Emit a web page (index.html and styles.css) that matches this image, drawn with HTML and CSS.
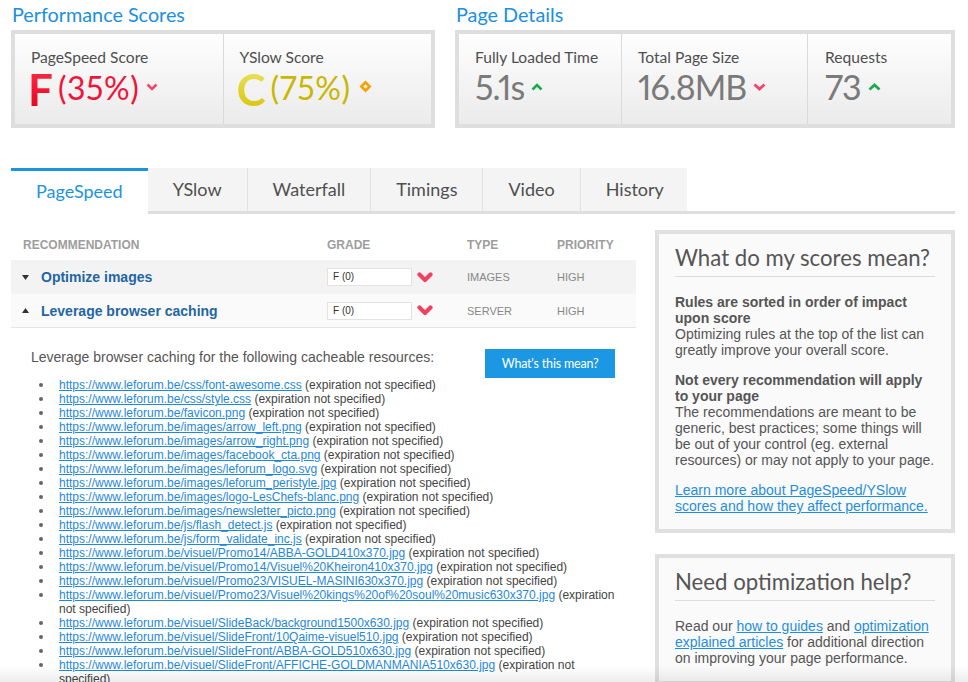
FILE: index.html
```html
<!DOCTYPE html>
<html lang="en">
<head>
<meta charset="utf-8">
<title>Performance Report</title>
<link rel="stylesheet" href="styles.css">
</head>
<body>
<div class="page">
  <div class="top">
    <section class="summary perf">
      <h2 class="section-title">Performance Scores</h2>
      <div class="box">
        <div class="card">
          <div class="label">PageSpeed Score</div>
          <div class="value"><span class="grade grade-f">F</span><span class="pct pct-red">(35%)</span><svg class="ind" width="12" height="8" viewBox="0 0 12 8"><polyline points="1.5,1.5 6,6 10.5,1.5" fill="none" stroke="#f0476a" stroke-width="2.6"/></svg></div>
        </div>
        <div class="card">
          <div class="label">YSlow Score</div>
          <div class="value"><span class="grade grade-c">C</span><span class="pct pct-yellow">(75%)</span><svg class="ind ind-diamond" width="13" height="13" viewBox="0 0 13 13"><polygon points="6.5,0.5 12.5,6.5 6.5,12.5 0.5,6.5" fill="#f5a100"/><polygon points="6.5,4.2 8.8,6.5 6.5,8.8 4.2,6.5" fill="#fff3d6"/></svg></div>
        </div>
      </div>
    </section>
    <section class="summary details">
      <h2 class="section-title">Page Details</h2>
      <div class="box">
        <div class="card">
          <div class="label">Fully Loaded Time</div>
          <div class="value">5.1s<svg class="ind" width="12" height="8" viewBox="0 0 12 8"><polyline points="1.5,6.5 6,2 10.5,6.5" fill="none" stroke="#1aab4b" stroke-width="2.6"/></svg></div>
        </div>
        <div class="card">
          <div class="label">Total Page Size</div>
          <div class="value">16.8MB<svg class="ind" width="13" height="8" viewBox="0 0 13 8"><polyline points="1.5,1.5 6.5,6 11.5,1.5" fill="none" stroke="#f0476a" stroke-width="2.8"/></svg></div>
        </div>
        <div class="card">
          <div class="label">Requests</div>
          <div class="value">73<svg class="ind" width="13" height="8" viewBox="0 0 13 8"><polyline points="1.5,6.5 6.5,2 11.5,6.5" fill="none" stroke="#1aab4b" stroke-width="2.8"/></svg></div>
        </div>
      </div>
    </section>
  </div>

  <nav class="tabs">
    <a class="tab active">PageSpeed</a>
    <a class="tab">YSlow</a>
    <a class="tab">Waterfall</a>
    <a class="tab">Timings</a>
    <a class="tab">Video</a>
    <a class="tab">History</a>
  </nav>

  <div class="main">
    <div class="content">
      <div class="rules">
        <div class="grid thead">
          <div class="c-rec">Recommendation</div>
          <div>Grade</div>
          <div>Type</div>
          <div>Priority</div>
        </div>
        <div class="grid trow odd">
          <div class="c-rec"><svg class="tri" width="7" height="5" viewBox="0 0 7 5"><polygon points="0,0 7,0 3.5,5" fill="#333"/></svg><a class="rule-name">Optimize images</a></div>
          <div class="c-grade"><span class="grade-box">F (0)</span><svg class="heart" width="16" height="11" viewBox="0 0 16 11"><polyline points="2.5,2.5 8,8 13.5,2.5" fill="none" stroke="#f2405f" stroke-width="4.2" stroke-linecap="round" stroke-linejoin="round"/></svg></div>
          <div class="c-meta">Images</div>
          <div class="c-meta">High</div>
        </div>
        <div class="grid trow even">
          <div class="c-rec"><svg class="tri" width="7" height="5" viewBox="0 0 7 5"><polygon points="0,5 7,5 3.5,0" fill="#333"/></svg><a class="rule-name">Leverage browser caching</a></div>
          <div class="c-grade"><span class="grade-box">F (0)</span><svg class="heart" width="16" height="11" viewBox="0 0 16 11"><polyline points="2.5,2.5 8,8 13.5,2.5" fill="none" stroke="#f2405f" stroke-width="4.2" stroke-linecap="round" stroke-linejoin="round"/></svg></div>
          <div class="c-meta">Server</div>
          <div class="c-meta">High</div>
        </div>
      </div>

      <div class="rule-details">
        <div class="details-head">
          <p>Leverage browser caching for the following cacheable resources:</p>
          <a class="btn">What's this mean?</a>
        </div>
        <ul class="res">
          <li><a>https://www.leforum.be/css/font-awesome.css</a> (expiration not specified)</li>
          <li><a>https://www.leforum.be/css/style.css</a> (expiration not specified)</li>
          <li><a>https://www.leforum.be/favicon.png</a> (expiration not specified)</li>
          <li><a>https://www.leforum.be/images/arrow_left.png</a> (expiration not specified)</li>
          <li><a>https://www.leforum.be/images/arrow_right.png</a> (expiration not specified)</li>
          <li><a>https://www.leforum.be/images/facebook_cta.png</a> (expiration not specified)</li>
          <li><a>https://www.leforum.be/images/leforum_logo.svg</a> (expiration not specified)</li>
          <li><a>https://www.leforum.be/images/leforum_peristyle.jpg</a> (expiration not specified)</li>
          <li><a>https://www.leforum.be/images/logo-LesChefs-blanc.png</a> (expiration not specified)</li>
          <li><a>https://www.leforum.be/images/newsletter_picto.png</a> (expiration not specified)</li>
          <li><a>https://www.leforum.be/js/flash_detect.js</a> (expiration not specified)</li>
          <li><a>https://www.leforum.be/js/form_validate_inc.js</a> (expiration not specified)</li>
          <li><a>https://www.leforum.be/visuel/Promo14/ABBA-GOLD410x370.jpg</a> (expiration not specified)</li>
          <li><a>https://www.leforum.be/visuel/Promo14/Visuel%20Kheiron410x370.jpg</a> (expiration not specified)</li>
          <li><a>https://www.leforum.be/visuel/Promo23/VISUEL-MASINI630x370.jpg</a> (expiration not specified)</li>
          <li><a>https://www.leforum.be/visuel/Promo23/Visuel%20kings%20of%20soul%20music630x370.jpg</a> (expiration not specified)</li>
          <li><a>https://www.leforum.be/visuel/SlideBack/background1500x630.jpg</a> (expiration not specified)</li>
          <li><a>https://www.leforum.be/visuel/SlideFront/10Qaime-visuel510.jpg</a> (expiration not specified)</li>
          <li><a>https://www.leforum.be/visuel/SlideFront/ABBA-GOLD510x630.jpg</a> (expiration not specified)</li>
          <li><a>https://www.leforum.be/visuel/SlideFront/AFFICHE-GOLDMANMANIA510x630.jpg</a> (expiration not specified)</li>
        </ul>
      </div>
    </div>

    <aside class="side">
      <div class="panel">
        <h3>What do my scores mean?</h3>
        <p><strong>Rules are sorted in order of impact upon score</strong><br>Optimizing rules at the top of the list can greatly improve your overall score.</p>
        <p><strong>Not every recommendation will apply to your page</strong><br>The recommendations are meant to be generic, best practices; some things will be out of your control (eg. external resources) or may not apply to your page.</p>
        <p><a>Learn more about PageSpeed/YSlow scores and how they affect performance.</a></p>
      </div>
      <div class="panel panel-help">
        <h3>Need optimization help?</h3>
        <p>Read our <a>how to guides</a> and <a>optimization explained articles</a> for additional direction on improving your page performance.</p>
      </div>
    </aside>
  </div>
</div>
<div class="fade"></div>
</body>
</html>
```

FILE: styles.css
```css
* { box-sizing: border-box; }
html, body { margin: 0; padding: 0; background: #fff; }
body {
  font-family: "Liberation Sans", Arial, sans-serif;
  color: #555;
  width: 968px;
  overflow: hidden;
}
a { cursor: pointer; }

.page { padding-left: 11px; width: 955px; }

/* ---------- summary boxes ---------- */
.top { display: flex; gap: 20px; }
.perf { width: 424px; }
.details { width: 500px; }
.section-title {
  font-family: Lato, "Open Sans", sans-serif;
  font-weight: 400;
  font-size: 19.8px;
  line-height: 24px;
  color: #1b8fe2;
  margin: 0;
  padding: 2px 0 4px 1px;
}
.box {
  display: flex;
  height: 98px;
  border: 4px solid #dedede;
}
.card {
  padding: 13px 16px 0;
  background: linear-gradient(#fefefe, #ebebeb);
  overflow: hidden;
}
.card + .card { border-left: 1px solid #dadada; }
.perf .card { flex: 1; }
.details .card:nth-child(1) { width: 162px; }
.details .card:nth-child(2) { width: 186px; }
.details .card:nth-child(3) { flex: 1; padding-left: 17px; }
.label {
  font-family: Lato, "Open Sans", sans-serif;
  font-size: 15.6px;
  line-height: 20px;
  color: #4f4f4f;
  white-space: nowrap;
}
.value {
  height: 40px;
  line-height: 40px;
  font-family: Lato, "Open Sans", sans-serif;
  font-size: 34px;
  letter-spacing: -1px;
  font-variant-numeric: proportional-nums;
  color: #7a7a7a;
  white-space: nowrap;
}
.grade {
  font-size: 44px;
  font-weight: 700;
  line-height: 0;
  letter-spacing: 0;
  vertical-align: -6px;
  margin-left: -3px;
  margin-right: 5px;
  -webkit-background-clip: text;
  background-clip: text;
  color: transparent;
}
.grade-f { background-image: linear-gradient(#ff3048, #e0001c); }
.grade-c { background-image: linear-gradient(#eee66a, #d2c300); }
.pct { font-size: 32px; letter-spacing: 0.6px; }
.pct-red { color: #f0143a; }
.pct-yellow { color: #c9b702; }
.ind { vertical-align: 9px; margin-left: 7px; }
.ind-diamond { vertical-align: 7px; margin-left: 8px; }

/* ---------- tabs ---------- */
.tabs {
  display: flex;
  align-items: flex-start;
  margin-top: 40px;
  border-bottom: 3px solid #dedede;
}
.tab {
  display: block;
  height: 43px;
  line-height: 43px;
  padding: 0 25px;
  background: #f4f4f4;
  border-right: 1px solid #e2e2e2;
  font-family: Lato, "Open Sans", sans-serif;
  font-size: 18px;
  color: #4f4f4f;
}
.tab:last-child { border-right: 0; padding-right: 23px; }
.tab.active {
  background: #fff;
  border-top: 3px solid #1a93e1;
  border-right: 0;
  height: 46px;
  line-height: 40px;
  margin-bottom: -3px;
  color: #1a93e1;
}

/* ---------- main area ---------- */
.main { display: flex; gap: 19px; margin-top: 16px; }
.content { width: 625px; }
.side { width: 300px; }

.grid {
  display: grid;
  grid-template-columns: 316px 140px 90px 1fr;
  align-items: center;
}
.thead {
  height: 30px;
  font-size: 12px;
  font-weight: 700;
  text-transform: uppercase;
  color: #9d9d9d;
}
.thead .c-rec { padding-left: 12px; }
.trow { height: 34px; }
.trow.odd { background: #f3f3f3; }
.trow.even { background: #fafafa; border-bottom: 1px solid #e6e6e6; }
.trow .c-rec { display: flex; align-items: center; padding-left: 11px; }
.tri { margin-right: 12px; flex: none; }
.rule-name {
  font-size: 14px;
  font-weight: 700;
  color: #1f66a3;
}
.c-grade { display: flex; align-items: center; }
.grade-box {
  display: block;
  width: 85px;
  height: 18px;
  line-height: 16px;
  padding-left: 5px;
  background: #fff;
  border: 1px solid #e2e2e2;
  font-size: 10px;
  color: #333;
}
.heart { margin-left: 5px; }
.c-meta {
  font-size: 11px;
  text-transform: uppercase;
  color: #888;
}

.rule-details { padding: 21px 21px 0 20px; }
.details-head {
  display: flex;
  justify-content: space-between;
  align-items: flex-start;
}
.details-head p {
  margin: 0;
  font-size: 14px;
  line-height: 16px;
  color: #555;
}
.btn {
  display: block;
  width: 130px;
  height: 29px;
  line-height: 29px;
  text-align: center;
  background: #1c97e3;
  color: #fff;
  font-family: Lato, "Open Sans", sans-serif;
  font-size: 12.5px;
  letter-spacing: -0.2px;
}
.res {
  list-style: none;
  margin: 0 -7px 0 0;
  padding: 0 0 0 8px;
  font-size: 12px;
  line-height: 14px;
  color: #444;
}
.res li { padding-left: 20px; text-indent: -20px; }
.res li::before {
  content: "";
  display: inline-block;
  width: 4px;
  height: 4px;
  border-radius: 50%;
  background: #666;
  margin-right: 16px;
  vertical-align: 2px;
  text-indent: 0;
}
.res a { color: #1f88da; text-decoration: underline; }

/* ---------- side panels ---------- */
.panel {
  border: 4px solid #e0e0e0;
  background: #fafafa;
  padding: 10px 16px 15px;
}
.panel + .panel { margin-top: 21px; }
.panel h3 {
  margin: 0;
  font-family: Lato, "Open Sans", sans-serif;
  font-weight: 400;
  font-size: 22.2px;
  line-height: 28px;
  color: #555;
  padding-bottom: 4px;
  border-bottom: 1px solid #dcdcdc;
  white-space: nowrap;
}
.panel p {
  margin: 14px 0 0;
  font-size: 14px;
  line-height: 16px;
  color: #555;
}
.panel h3 + p { margin-top: 17px; }
.panel a { color: #1f8ee0; text-decoration: underline; }

.fade {
  position: fixed;
  left: 0;
  right: 0;
  bottom: 0;
  height: 16px;
  background: linear-gradient(rgba(0,0,0,0), rgba(0,0,0,0.07));
  pointer-events: none;
}
```
